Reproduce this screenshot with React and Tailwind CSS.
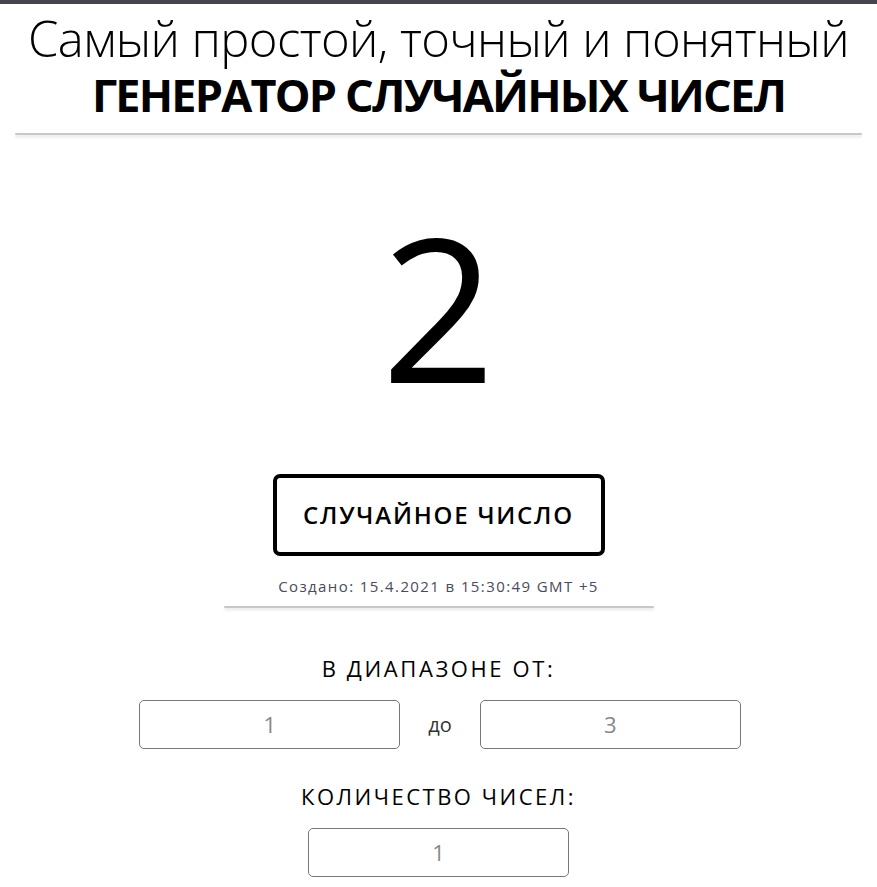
export default function App() {
  const font = { fontFamily: '"Open Sans", "Noto Sans", sans-serif' };

  return (
    <div className="min-h-screen bg-white text-black" style={font}>
      <div className="h-[4px] bg-[#45454d]" />

      <header className="flex flex-col items-center pt-[6px]">
        <h1 className="text-[49px] font-light leading-[56px] tracking-[-0.6px]">
          Самый простой, точный и понятный
        </h1>
        <h2 className="mt-[4px] text-[45px] font-bold leading-[50px] tracking-[-1.8px]">
          ГЕНЕРАТОР СЛУЧАЙНЫХ ЧИСЕЛ
        </h2>
      </header>

      <div className="mx-[15px] mt-[13px] h-[2px] rounded-full bg-[#c8c8c8] shadow-[0_2px_3px_rgba(0,0,0,0.12)]" />

      <main className="flex flex-col items-center">
        <div className="mt-[71px] h-[200px] text-[200px] font-normal leading-[200px]">2</div>

        <button className="mt-[68px] h-[82px] w-[332px] rounded-[7px] border-[4px] border-black bg-white text-[24px] font-semibold tracking-[1.8px]">
          СЛУЧАЙНОЕ ЧИСЛО
        </button>

        <p className="mt-[20px] text-[15px] leading-[20px] tracking-[1.4px] text-[#4a4a5a]">
          Создано: 15.4.2021 в 15:30:49 GMT +5
        </p>

        <div className="mt-[10px] h-[2px] w-[430px] rounded-full bg-[#c8c8c8] shadow-[0_2px_3px_rgba(0,0,0,0.12)]" />

        <label className="mt-[45px] text-[22px] leading-[30px] tracking-[2.6px]">В ДИАПАЗОНЕ ОТ:</label>

        <div className="mt-[17px] flex items-center gap-[28px] pl-[3px]">
          <div className="flex h-[49px] w-[261px] items-center justify-center rounded-[5px] border border-[#777] text-[22px] text-[#888]">1</div>
          <span className="text-[20px] text-[#333]">до</span>
          <div className="flex h-[49px] w-[261px] items-center justify-center rounded-[5px] border border-[#777] text-[22px] text-[#888]">3</div>
        </div>

        <label className="mt-[32px] text-[22px] leading-[30px] tracking-[2.5px]">КОЛИЧЕСТВО ЧИСЕЛ:</label>

        <div className="mt-[17px] flex h-[49px] w-[261px] items-center justify-center rounded-[5px] border border-[#777] text-[22px] text-[#888]">1</div>
      </main>
    </div>
  );
}
